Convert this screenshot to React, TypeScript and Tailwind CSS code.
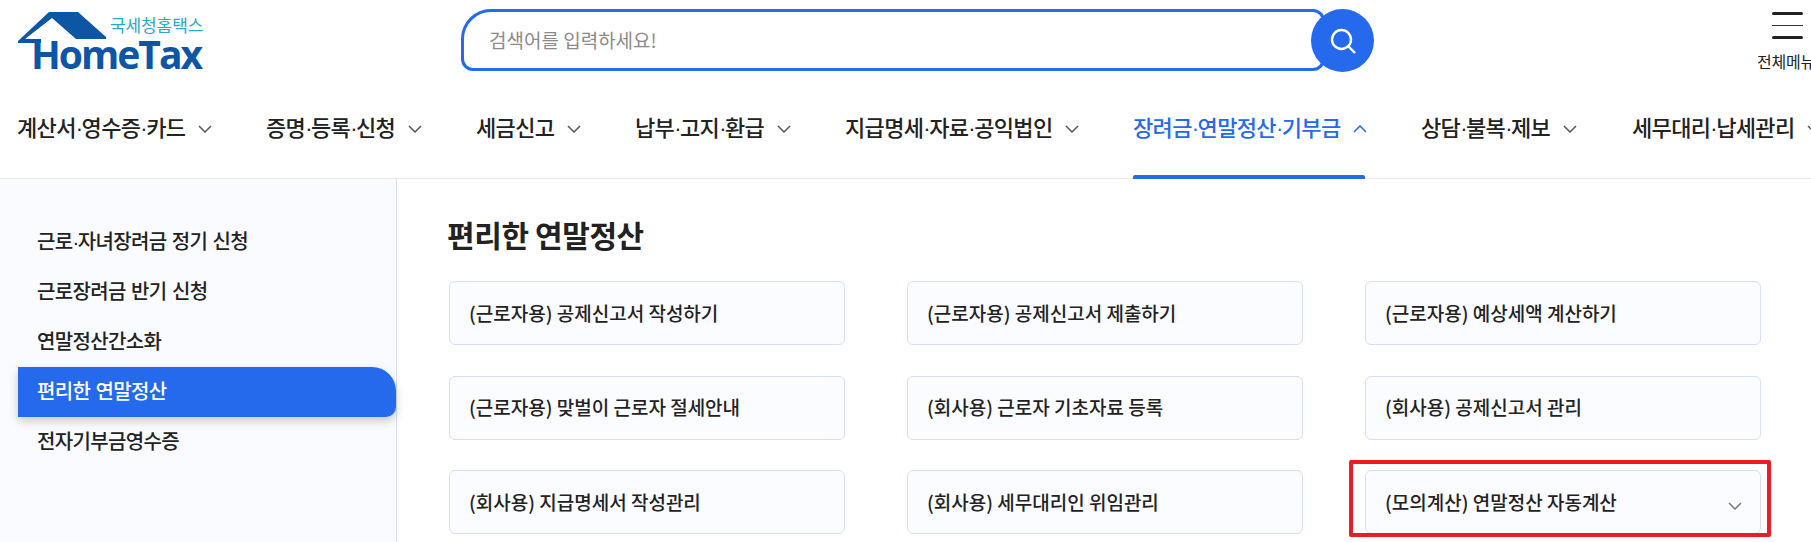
import React from 'react';

const navItems = [
  { label: '계산서·영수증·카드', w: 'w-[249px]' },
  { label: '증명·등록·신청', w: 'w-[210px]' },
  { label: '세금신고', w: 'w-[159px]' },
  { label: '납부·고지·환급', w: 'w-[210px]' },
  { label: '지급명세·자료·공익법인', w: 'w-[288px]' },
  { label: '장려금·연말정산·기부금', w: 'w-[288px]', active: true },
  { label: '상담·불복·제보', w: 'w-[211px]' },
  { label: '세무대리·납세관리', w: 'w-[249px]' },
];

const sideItems = ['근로·자녀장려금 정기 신청', '근로장려금 반기 신청', '연말정산간소화', '편리한 연말정산', '전자기부금영수증'];

const cards = [
  '(근로자용) 공제신고서 작성하기',
  '(근로자용) 공제신고서 제출하기',
  '(근로자용) 예상세액 계산하기',
  '(근로자용) 맞벌이 근로자 절세안내',
  '(회사용) 근로자 기초자료 등록',
  '(회사용) 공제신고서 관리',
  '(회사용) 지급명세서 작성관리',
  '(회사용) 세무대리인 위임관리',
  '(모의계산) 연말정산 자동계산',
];

const Chevron = ({ up, className }: { up?: boolean; className: string }) => (
  <svg viewBox="0 0 14 8" className={className} fill="none" stroke="currentColor" strokeWidth="1.5">
    <path d={up ? 'M1 7l6-6 6 6' : 'M1 1l6 6 6-6'} />
  </svg>
);

// the middle dot is narrow in the original, the CJK font draws it too wide
const Dotted = ({ text }: { text: string }) => (
  <span>
    {text.split('·').map((part, i) => (
      <React.Fragment key={i}>
        {i > 0 && <span className="font-['Liberation_Sans'] tracking-[-1.5px]">·</span>}
        {part}
      </React.Fragment>
    ))}
  </span>
);

const App = () => {
  return (
    <div className="w-[1811px] h-[542px] overflow-hidden bg-white font-['Noto_Sans_CJK_KR',sans-serif] text-[#222]">
      {/* top */}
      <div className="flex h-[90px]">
        <div className="relative w-[461px] shrink-0">
          <svg viewBox="0 0 88 31" className="absolute left-[18px] top-[12px] w-[88px] h-[31px]">
            <path d="M31 0H60L88 25V27H58L34 6L7 27H23V31H0V29Z" fill="#0d55a5" />
          </svg>
          <div className="absolute left-[110px] top-[15px] text-[17px] leading-[20px] tracking-[-0.1px] text-[#2aa7c9]">국세청홈택스</div>
          <div className="absolute left-[31px] top-[39px] font-['Open_Sans',sans-serif] font-bold text-[#0d55a5] text-[39px] leading-[30px] tracking-[-2px]">HomeTax</div>
        </div>
        <div className="flex mt-[9px] h-[63px]">
          <div className="w-[864px] h-[62px] border-[3px] border-[#2569ed] rounded-tl-[30px] rounded-tr-[12px] rounded-bl-[12px] rounded-br-[12px] flex items-center pl-[25px] text-[19px] text-[#8b8b8b]">
            검색어를 입력하세요!
          </div>
          <div className="w-[63px] h-[63px] -ml-[14px] rounded-full bg-[#2569ed] flex items-center justify-center">
            <svg viewBox="0 0 28 28" className="w-[28px] h-[28px]" fill="none" stroke="white" strokeWidth="2.4">
              <circle cx="12.5" cy="12.5" r="9.5" />
              <path d="M19.5 19.5L26 26" />
            </svg>
          </div>
        </div>
        <div className="ml-[383px] w-[62px] shrink-0 pt-[12px] flex flex-col">
          <div className="ml-[15px] w-[31px] flex flex-col gap-[9px]">
            <div className="h-[3px] bg-[#222] rounded-sm" />
            <div className="h-[1px] bg-[#333] my-[1px]" />
            <div className="h-[3px] bg-[#222] rounded-sm" />
          </div>
          <div className="mt-[10px] text-[16px] leading-[24px] tracking-[-0.2px] whitespace-nowrap">전체메뉴</div>
        </div>
      </div>

      {/* nav */}
      <div className="flex h-[89px] pl-[17px] border-b border-[#e8e8ea]">
        {navItems.map((item) => (
          <div key={item.label} className={`${item.w} shrink-0 relative flex items-start pt-[20px] text-[22px] leading-[32px] font-medium tracking-[-0.66px] whitespace-nowrap ${item.active ? 'text-[#2569ed]' : 'text-[#222]'}`}>
            <Dotted text={item.label} />
            <Chevron up={item.active} className={`ml-[13px] mt-[15px] w-[14px] h-[8px] ${item.active ? 'text-[#2569ed]' : 'text-[#55555f]'}`} />
            {item.active && <div className="absolute left-0 bottom-[-1px] w-[232px] h-[4px] bg-[#2569ed] rounded-t-[2px]" />}
          </div>
        ))}
      </div>

      {/* body */}
      <div className="flex h-[363px]">
        <div className="w-[397px] shrink-0 bg-[#f9fbff] border-r border-[#d4e0f8] pl-[18px] pt-[38px]">
          {sideItems.map((s, i) => (
            <div key={s} className={`h-[50px] pl-[19px] pb-[2px] flex items-center text-[20px] font-medium tracking-[-0.65px] [word-spacing:1.5px] whitespace-nowrap ${i === 3 ? 'bg-[#2569ed] text-white rounded-tr-[24px] rounded-br-[10px] shadow-[0_4px_10px_rgba(0,0,0,0.2)]' : 'text-[#222]'}`}>
              <Dotted text={s} />
            </div>
          ))}
        </div>
        <div className="relative flex-1 pl-[50px] pt-[35px]">
          <h2 className="text-[30px] leading-[40px] font-bold tracking-[-0.4px] text-[#222]">편리한 연말정산</h2>
          <div className="mt-[27px] grid grid-cols-[396px_396px_396px] gap-x-[62px] gap-y-[30.5px] ml-[2px]">
            {cards.map((c, i) => (
              <div key={c} className="h-[64px] bg-[#fbfcff] border border-[#d4e0f8] rounded-[6px] pl-[19px] pr-[19px] flex items-center justify-between text-[19px] font-medium tracking-[0px]">
                {c}
                {i === 8 && <Chevron className="mt-[8px] mr-[-1px] w-[14px] h-[8px] text-[#777780]" />}
              </div>
            ))}
          </div>
          <div className="absolute left-[952px] top-[281px] w-[422px] h-[77px] border-[4px] border-[#ed1c24] rounded-[2px]" />
        </div>
      </div>
    </div>
  );
};

export default App;
